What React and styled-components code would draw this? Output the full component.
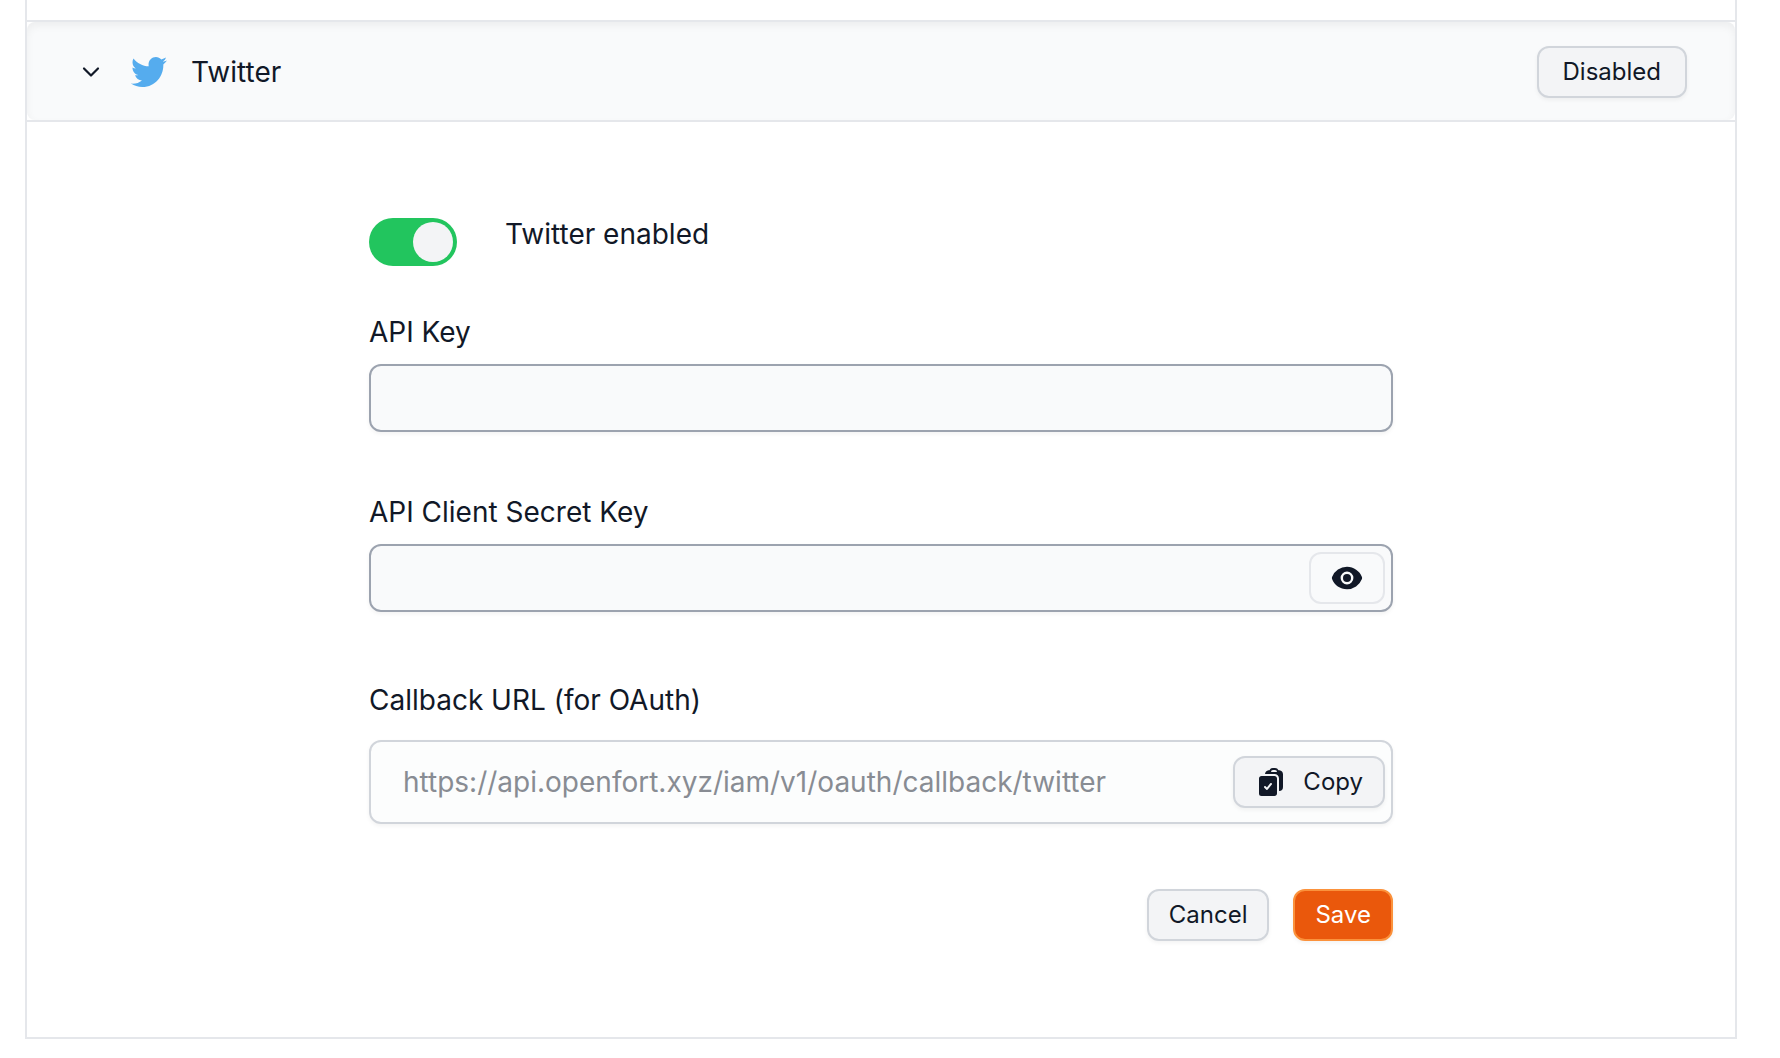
import React, { useState } from 'react'
import styled, { createGlobalStyle } from 'styled-components'

const GlobalStyle = createGlobalStyle`
  *,
  *::before,
  *::after {
    box-sizing: border-box;
  }
  body {
    margin: 0;
    background: #fff;
    color: #111827;
    font-family: Inter, 'Liberation Sans', sans-serif;
    font-size: 28px;
    line-height: 32px;
  }
  button,
  input {
    font: inherit;
    color: inherit;
  }
`

const Page = styled.main`
  padding: 0 43px 20px 25px;
`

const Panel = styled.section`
  border: 2px solid #e5e7eb;
  border-top: 0;
  padding-top: 20px;
`

const HeaderFrame = styled.div`
  border: solid #e5e7eb;
  border-width: 2px 0;
`

const Header = styled.header`
  display: flex;
  align-items: center;
  padding: 24px 48px 22px;
  border-radius: 8px;
  background: #f9fafb;
  box-shadow: inset 0 4px 8px rgba(0, 0, 0, 0.05);
`

const Summary = styled.button`
  display: flex;
  flex: 1;
  align-items: center;
  gap: 24px;
  padding: 0;
  border: 0;
  background: none;
  text-align: left;
  cursor: pointer;
`

const Chevron = styled.svg`
  width: 32px;
  height: 32px;
`

const Bird = styled.svg`
  width: 36px;
  height: 30px;
`

const Icon = styled.svg`
  width: 32px;
  height: 32px;
  fill: currentColor;
`

const Button = styled.button`
  display: flex;
  align-items: center;
  justify-content: center;
  gap: 16px;
  height: 52px;
  padding: 0 ${({ $wide }) => ($wide ? 24 : 20)}px;
  border: 2px solid ${({ $primary }) => ($primary ? '#fb923c' : '#d1d5db')};
  border-radius: 12px;
  background: ${({ $primary }) => ($primary ? '#ea580c' : '#f3f4f6')};
  color: ${({ $primary }) => ($primary ? '#fff' : '#111827')};
  box-shadow: 0 2px 4px rgba(0, 0, 0, 0.05);
  font-size: 24px;
  cursor: pointer;
`

const IconButton = styled(Button)`
  width: 76px;
  padding: 0;
  border-color: #e5e7eb;
  background: none;
  box-shadow: none;
`

const Form = styled.form`
  max-width: 1024px;
  margin: 0 auto;
  padding: 96px 0;
`

const SwitchRow = styled.div`
  display: flex;
  align-items: flex-start;
  gap: 48px;
  margin-bottom: 50px;
`

const Switch = styled.input`
  appearance: none;
  display: flex;
  width: 88px;
  height: 48px;
  margin: 0;
  padding: 4px;
  border-radius: 24px;
  background: #d1d5db;
  cursor: pointer;

  &::before {
    content: '';
    width: 40px;
    height: 40px;
    border-radius: 50%;
    background: #f3f4f6;
  }
  &:checked {
    justify-content: flex-end;
    background: #22c55e;
  }
`

const Field = styled.div`
  display: flex;
  flex-direction: column;
  gap: ${({ $readOnly }) => ($readOnly ? 24 : 16)}px;
  margin-bottom: 64px;
`

const SecretField = styled(Field)`
  margin-bottom: 72px;
`

const Box = styled.div`
  display: flex;
  align-items: center;
  height: ${({ $readOnly }) => ($readOnly ? 84 : 68)}px;
  padding-right: 6px;
  border: 2px solid ${({ $readOnly }) => ($readOnly ? '#d1d5db' : '#9ca3af')};
  border-radius: 12px;
  background: ${({ $readOnly }) => ($readOnly ? '#fcfdfd' : '#f9fafb')};
  box-shadow: 0 2px 4px rgba(0, 0, 0, 0.05);
`

const Input = styled.input`
  flex: 1;
  min-width: 0;
  height: 100%;
  padding: 0 32px;
  border: 0;
  outline: 0;
  background: none;

  &:read-only {
    color: #888c93;
  }
`

const Actions = styled.div`
  display: flex;
  justify-content: flex-end;
  gap: 24px;
  padding-top: 1px;
`

function App () {
  const [enabled, setEnabled] = useState(true)
  const [visible, setVisible] = useState(false)
  const [open, setOpen] = useState(true)

  return (
    <Page>
      <GlobalStyle />
      <Panel>
        <HeaderFrame>
          <Header>
            <Summary type="button" aria-expanded={open} onClick={() => setOpen(!open)}>
              <Chevron viewBox="0 0 32 32" fill="none" stroke="#111827" strokeWidth="2.2" strokeLinecap="round" strokeLinejoin="round" aria-hidden="true">
                <path d="M9 12.500l7 7 7-7" />
              </Chevron>
              <Bird viewBox="0 0 512 416" preserveAspectRatio="none" fill="#55acee" aria-hidden="true">
                <path d="M459.37 103.634c.325 4.548.325 9.097.325 13.645 0 138.72-105.583 298.558-298.558 298.558-59.452 0-114.68-17.219-161.137-47.106 8.447.974 16.568 1.299 25.34 1.299 49.055 0 94.213-16.568 130.274-44.832-46.132-.975-84.792-31.188-98.112-72.772 6.498.974 12.995 1.624 19.818 1.624 9.421 0 18.843-1.3 27.614-3.573-48.081-9.747-84.143-51.98-84.143-102.985v-1.299c13.969 7.797 30.214 12.67 47.431 13.319-28.264-18.843-46.781-51.005-46.781-87.391 0-19.492 5.197-37.36 14.294-52.954 51.655 63.675 129.3 105.258 216.365 109.807-1.624-7.797-2.599-15.918-2.599-24.04 0-57.828 46.782-104.934 104.934-104.934 30.213 0 57.502 12.67 76.67 33.137 23.715-4.548 46.456-13.32 66.599-25.34-7.798 24.366-24.366 44.833-46.132 57.827 21.117-2.273 41.584-8.122 60.426-16.243-14.292 20.791-32.161 39.308-52.628 54.253z" />
              </Bird>
              <span>Twitter</span>
            </Summary>
            <Button type="button" $wide>Disabled</Button>
          </Header>
        </HeaderFrame>
        {open && (
          <Form onSubmit={e => e.preventDefault()}>
            <SwitchRow>
              <Switch id="enabled" type="checkbox" role="switch" checked={enabled} onChange={e => setEnabled(e.target.checked)} />
              <label htmlFor="enabled">Twitter enabled</label>
            </SwitchRow>
            <Field>
              <label htmlFor="key">API Key</label>
              <Box>
                <Input id="key" type="text" />
              </Box>
            </Field>
            <SecretField>
              <label htmlFor="secret">API Client Secret Key</label>
              <Box>
                <Input id="secret" type={visible ? 'text' : 'password'} />
                <IconButton type="button" aria-label="Show secret" onClick={() => setVisible(!visible)}>
                  <Icon viewBox="0 0 20 20" aria-hidden="true">
                    <path d="M10 12.5a2.5 2.5 0 100-5 2.5 2.5 0 000 5z" />
                    <path fillRule="evenodd" d="M.664 10.59a1.651 1.651 0 010-1.186A10.004 10.004 0 0110 3c4.257 0 7.893 2.66 9.336 6.41.147.381.146.804 0 1.186A10.004 10.004 0 0110 17c-4.257 0-7.893-2.66-9.336-6.41zM14 10a4 4 0 11-8 0 4 4 0 018 0z" clipRule="evenodd" />
                  </Icon>
                </IconButton>
              </Box>
            </SecretField>
            <Field $readOnly>
              <label htmlFor="callback">Callback URL (for OAuth)</label>
              <Box $readOnly>
                <Input id="callback" type="text" readOnly value="https://api.openfort.xyz/iam/v1/oauth/callback/twitter" />
                <Button type="button">
                  <Icon viewBox="0 0 24 24" aria-hidden="true">
                    <path fillRule="evenodd" d="M7.502 6h7.128A3.375 3.375 0 0118 9.375v9.375a3 3 0 003-3V6.108c0-1.505-1.125-2.811-2.664-2.94a48.972 48.972 0 00-.673-.05A3 3 0 0015 1.5h-1.5a3 3 0 00-2.663 1.618c-.225.015-.45.032-.673.05C8.662 3.295 7.554 4.542 7.502 6zM13.5 3A1.5 1.5 0 0012 4.5h4.5A1.5 1.5 0 0015 3h-1.5z" clipRule="evenodd" />
                    <path fillRule="evenodd" d="M3 9.375C3 8.339 3.84 7.5 4.875 7.5h9.75c1.036 0 1.875.84 1.875 1.875v11.25c0 1.035-.84 1.875-1.875 1.875h-9.75A1.875 1.875 0 013 20.625V9.375zm9.586 4.594a.75.75 0 00-1.172-.938l-2.476 3.096-.908-.907a.75.75 0 00-1.06 1.06l1.5 1.5a.75.75 0 001.116-.062l3-3.75z" clipRule="evenodd" />
                  </Icon>
                  Copy
                </Button>
              </Box>
            </Field>
            <Actions>
              <Button type="button">Cancel</Button>
              <Button type="submit" $primary>Save</Button>
            </Actions>
          </Form>
        )}
      </Panel>
    </Page>
  )
}

export default App
